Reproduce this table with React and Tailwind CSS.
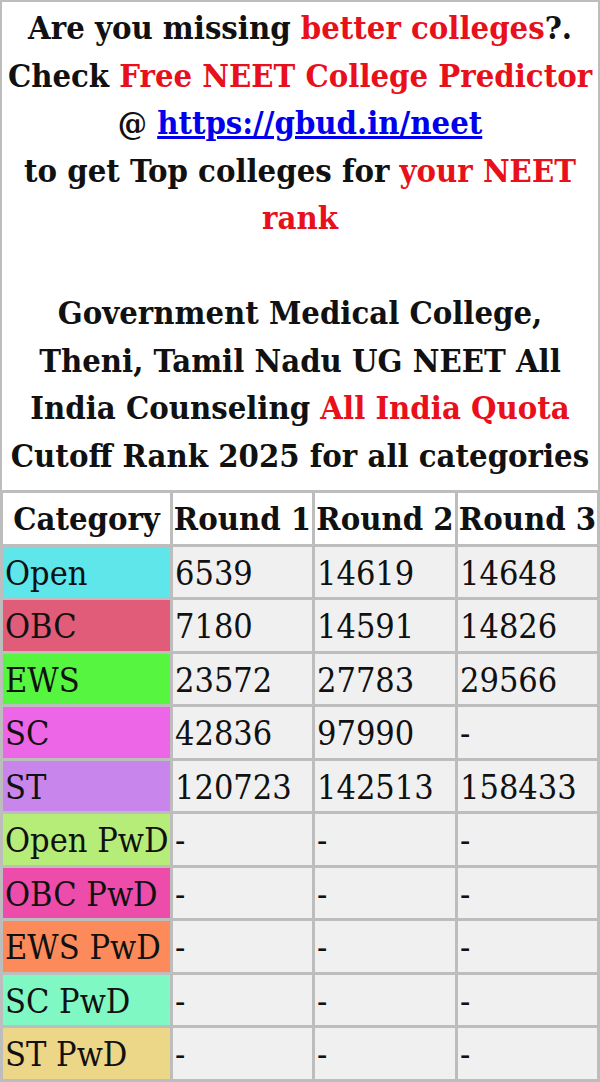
import React from "react";

const F = { fontFamily: '"DejaVu Serif Condensed", "DejaVu Serif", serif' };

const rows = [
  ["Open", "bg-[#5ee6ea]", "6539", "14619", "14648"],
  ["OBC", "bg-[#e05c78]", "7180", "14591", "14826"],
  ["EWS", "bg-[#55f540]", "23572", "27783", "29566"],
  ["SC", "bg-[#ee66e8]", "42836", "97990", "-"],
  ["ST", "bg-[#c886ec]", "120723", "142513", "158433"],
  ["Open PwD", "bg-[#b6ec78]", "-", "-", "-"],
  ["OBC PwD", "bg-[#ee4caa]", "-", "-", "-"],
  ["EWS PwD", "bg-[#fc8a5a]", "-", "-", "-"],
  ["SC PwD", "bg-[#80f8c4]", "-", "-", "-"],
  ["ST PwD", "bg-[#ecd688]", "-", "-", "-"],
];

const R = ({ children }) => <span className="text-[#e8101a]">{children}</span>;

export default function App() {
  return (
    <div className="w-[600px] h-[1082px] bg-[#bdbdbd] pt-[2px] px-[2px] pb-[3px] overflow-hidden" style={F}>
      <div className="bg-white h-[488px] flex flex-col items-center pt-[2px] text-[32.5px] font-bold leading-[47.5px] text-[#111]">
        <div className="whitespace-nowrap">Are you missing <R>better colleges</R>?.</div>
        <div className="whitespace-nowrap">Check <R>Free NEET College Predictor</R></div>
        <div className="whitespace-nowrap">@ <span className="text-[#0000ee] underline">https://gbud.in/neet</span></div>
        <div className="whitespace-nowrap">to get Top colleges for <R>your NEET</R></div>
        <div className="whitespace-nowrap"><R>rank</R></div>
        <div className="h-[47.5px]"></div>
        <div className="whitespace-nowrap">Government Medical College,</div>
        <div className="whitespace-nowrap">Theni, Tamil Nadu UG NEET All</div>
        <div className="whitespace-nowrap">India Counseling <R>All India Quota</R></div>
        <div className="whitespace-nowrap">Cutoff Rank 2025 for all categories</div>
      </div>
      <div className="mt-[3px] ml-[1px] grid grid-cols-[167px_139px_140px_139px] auto-rows-[50.5px] gap-[3px] text-[34px] text-[#111]">
        {["Category", "Round 1", "Round 2", "Round 3"].map((h) => (
          <div key={h} className="bg-white font-bold text-[32.5px] flex items-center justify-center whitespace-nowrap pt-[3px]">{h}</div>
        ))}
        {rows.map(([c, bg, a, b, d]) => (
          <React.Fragment key={c}>
            <div className={`${bg} flex items-center px-[2px] pt-[3px] whitespace-nowrap`}>{c}</div>
            <div className="bg-[#f0f0f0] flex items-center px-[2px] pt-[3px] whitespace-nowrap">{a}</div>
            <div className="bg-[#f0f0f0] flex items-center px-[2px] pt-[3px] whitespace-nowrap">{b}</div>
            <div className="bg-[#f0f0f0] flex items-center px-[2px] pt-[3px] whitespace-nowrap">{d}</div>
          </React.Fragment>
        ))}
      </div>
    </div>
  );
}
